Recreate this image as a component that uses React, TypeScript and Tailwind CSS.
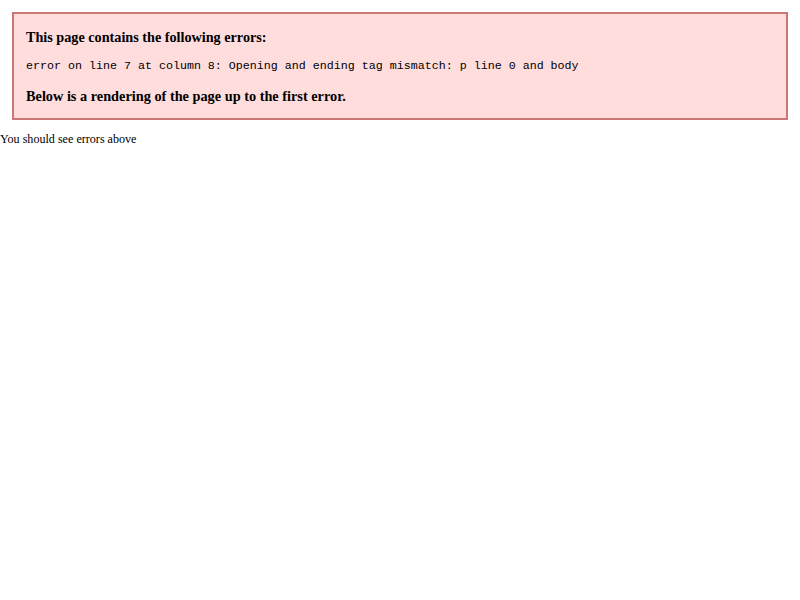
export default function App() {
  return (
    <div className="min-h-[600px] bg-white text-black text-[12.1px] leading-[15px]" style={{ fontFamily: '"Liberation Serif", serif' }}>
      <div className="mx-[12px] mt-[12px] mb-[12px] border-2 border-[#cc7777] bg-[#ffdddd] px-[12px] py-0">
        <h3 className="mt-[15px] mb-[13px] text-[14.2px] leading-[17px] font-bold">This page contains the following errors:</h3>
        <div className="text-[11.67px] leading-[14px] whitespace-pre" style={{ fontFamily: '"Liberation Mono", monospace' }}>
          error on line 7 at column 8: Opening and ending tag mismatch: p line 0 and body
        </div>
        <h3 className="mt-[15px] mb-[13px] text-[14.3px] leading-[17px] font-bold">Below is a rendering of the page up to the first error.</h3>
      </div>
      <p>You should see errors above</p>
    </div>
  );
}
